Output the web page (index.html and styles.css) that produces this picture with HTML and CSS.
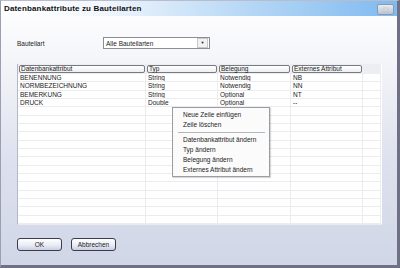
FILE: index.html
```html
<!DOCTYPE html>
<html lang="de">
<head>
    <meta charset="UTF-8">
    <title>Datenbankattribute zu Bauteilarten</title>
    <link rel="stylesheet" href="styles.css">
</head>
<body>
    <div class="window">
        <div class="titlebar">
            <span class="title">Datenbankattribute zu Bauteilarten</span>
            <span class="close">&#x2715;</span>
        </div>

        <div class="content">
            <div class="field-row">
                <span class="label">Bauteilart</span>
                <div class="select">
                    <span class="select-text">Alle Bauteilarten</span>
                    <span class="select-arrow">&#9660;</span>
                </div>
            </div>

            <div class="grid-wrap">
                <div class="grid">
                    <div class="head"><span>Datenbankattribut</span></div>
                    <div class="head"><span>Typ</span></div>
                    <div class="head"><span>Belegung</span></div>
                    <div class="head"><span>Externes Attribut</span></div>
                    <div class="head-fill"></div>

                    <div class="cell">BENENNUNG</div><div class="cell">String</div><div class="cell">Notwendig</div><div class="cell">NB</div><div class="cell"></div>
                    <div class="cell">NORMBEZEICHNUNG</div><div class="cell">String</div><div class="cell">Notwendig</div><div class="cell">NN</div><div class="cell"></div>
                    <div class="cell">BEMERKUNG</div><div class="cell">String</div><div class="cell">Optional</div><div class="cell">NT</div><div class="cell"></div>
                    <div class="cell">DRUCK</div><div class="cell">Double</div><div class="cell">Optional</div><div class="cell">--</div><div class="cell"></div>
                    <div class="cell"></div><div class="cell"></div><div class="cell"></div><div class="cell"></div><div class="cell"></div>
                    <div class="cell"></div><div class="cell"></div><div class="cell"></div><div class="cell"></div><div class="cell"></div>
                    <div class="cell"></div><div class="cell"></div><div class="cell"></div><div class="cell"></div><div class="cell"></div>
                    <div class="cell"></div><div class="cell"></div><div class="cell"></div><div class="cell"></div><div class="cell"></div>
                    <div class="cell"></div><div class="cell"></div><div class="cell"></div><div class="cell"></div><div class="cell"></div>
                    <div class="cell"></div><div class="cell"></div><div class="cell"></div><div class="cell"></div><div class="cell"></div>
                    <div class="cell"></div><div class="cell"></div><div class="cell"></div><div class="cell"></div><div class="cell"></div>
                    <div class="cell"></div><div class="cell"></div><div class="cell"></div><div class="cell"></div><div class="cell"></div>
                    <div class="cell"></div><div class="cell"></div><div class="cell"></div><div class="cell"></div><div class="cell"></div>
                    <div class="cell"></div><div class="cell"></div><div class="cell"></div><div class="cell"></div><div class="cell"></div>
                    <div class="cell"></div><div class="cell"></div><div class="cell"></div><div class="cell"></div><div class="cell"></div>
                    <div class="cell"></div><div class="cell"></div><div class="cell"></div><div class="cell"></div><div class="cell"></div>
                    <div class="cell"></div><div class="cell"></div><div class="cell"></div><div class="cell"></div><div class="cell"></div>
                    <div class="cell"></div><div class="cell"></div><div class="cell"></div><div class="cell"></div><div class="cell"></div>
                </div>

                <div class="menu">
                    <div class="menu-item">Neue Zeile einfügen</div>
                    <div class="menu-item">Zeile löschen</div>
                    <div class="menu-sep"></div>
                    <div class="menu-item">Datenbankattribut ändern</div>
                    <div class="menu-item">Typ ändern</div>
                    <div class="menu-item">Belegung ändern</div>
                    <div class="menu-item">Externes Attribut ändern</div>
                </div>
            </div>

            <div class="buttons">
                <button class="btn">OK</button>
                <button class="btn">Abbrechen</button>
            </div>
        </div>
    </div>
</body>
</html>
```

FILE: styles.css
```css
body, html {
    margin: 0;
    padding: 0;
    font-family: "Liberation Sans", Arial, sans-serif;
    color: #1a1a1a;
}
.window {
    width: 400px;
    height: 268px;
    box-sizing: border-box;
    border-left: 1px solid #9a9fb4;
    border-top: 1px solid #b8bccb;
    border-right: 3px solid #6f6f86;
    border-bottom: 3px solid #6f6f86;
    display: flex;
    flex-direction: column;
    background: linear-gradient(to bottom, #ffffff 0px, #f4f5f9 60px, #dde1ee 160px, #d1d6e7 264px);
}
.titlebar {
    height: 15px;
    display: flex;
    align-items: center;
    justify-content: space-between;
    padding: 0 3px 0 3px;
    background: linear-gradient(to right, #ffffff 0%, #f2f7fd 25%, #b9d9f6 60%, #7fbaf0 100%);
}
.title {
    font-weight: bold;
    font-size: 8px;
    letter-spacing: 0.15px;
    color: #111;
}
.close {
    width: 15px;
    height: 9px;
    margin-top: 1px;
    border: 1px solid #8d9aae;
    border-radius: 2px;
    background: linear-gradient(to bottom, #e9edf3, #b8c3d2);
    color: #fff;
    font-size: 7px;
    line-height: 9px;
    text-align: center;
    text-shadow: 0 0 1px #555;
}
.content {
    flex: 1;
    display: flex;
    flex-direction: column;
    padding: 21px 15px 0 16px;
}
.field-row {
    display: flex;
    align-items: center;
    height: 12px;
}
.label {
    width: 86px;
    font-size: 6.5px;
}
.select {
    width: 105px;
    height: 10px;
    border: 1px solid #8d8d95;
    background: #fff;
    display: flex;
    align-items: center;
    justify-content: space-between;
}
.select-text {
    font-size: 6.5px;
    padding-left: 2px;
}
.select-arrow {
    width: 9px;
    height: 8px;
    margin-right: 1px;
    border: 1px solid #c8c8cc;
    background: #f2f2f2;
    font-size: 4px;
    line-height: 8px;
    text-align: center;
}
.grid-wrap {
    position: relative;
    margin-top: 15px;
    width: 365px;
}
.grid {
    display: grid;
    grid-template-columns: 128px 72px 73px 72px 18px;
    grid-template-rows: 10px repeat(18, 8.33px);
    background: #fff;
    border-left: 1px solid #b4b8c6;
    border-bottom: 1px solid #e8eaf0;
    font-size: 6.5px;
}
.head, .head-fill {
    background: #eceef3;
    padding: 1px 1px 1px 1px;
}
.head span {
    display: block;
    height: 6px;
    line-height: 6px;
    padding: 0 1px;
    border: 1px solid #777a82;
    border-radius: 2px;
    background: linear-gradient(to bottom, #ffffff, #eeeeee);
}
.cell {
    border-right: 1px solid #ececee;
    border-bottom: 1px solid #ececee;
    padding-left: 2px;
    line-height: 8px;
    overflow: hidden;
    white-space: nowrap;
}
.menu {
    position: absolute;
    left: 155px;
    top: 43px;
    width: 98px;
    height: 70px;
    background: #fbfbfb;
    border: 1px solid #9c9ca4;
    box-shadow: 1px 1px 1px rgba(0, 0, 0, 0.15);
    font-size: 6.5px;
    padding-top: 1.5px;
    box-sizing: border-box;
}
.menu-item {
    height: 10px;
    line-height: 10px;
    padding-left: 10px;
}
.menu-sep {
    height: 1px;
    background: #b5b5bb;
    margin: 2px 4px 2px 5px;
}
.buttons {
    display: flex;
    gap: 9px;
    margin-top: 13px;
}
.btn {
    width: 45px;
    height: 13px;
    padding: 0;
    border: 1px solid #3c3c4e;
    border-radius: 3px;
    background: linear-gradient(to bottom, #ffffff, #e7eaf2 60%, #c6cde0);
    font-family: "Liberation Sans", Arial, sans-serif;
    font-size: 6.5px;
    color: #1a1a1a;
}
```
